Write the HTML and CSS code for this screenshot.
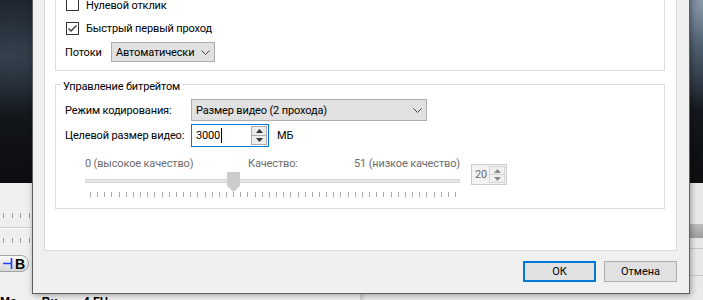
FILE: index.html
```html
<!DOCTYPE html>
<html lang="ru">
<head>
    <meta charset="utf-8">
    <title>Параметры кодирования</title>
    <link rel="stylesheet" href="styles.css">
</head>
<body>
    <div class="desk">
        <div class="video"></div>
        <div class="tools">
            <div class="tools-left">
                <div class="ticks"></div>
                <div class="rule"></div>
                <div class="ticks"></div>
                <div class="markb">
                    <svg width="10" height="13" viewBox="0 0 10 13"><path d="M0 6.5H8.5M8.5 1V12" stroke="#1f3cff" stroke-width="1.6" fill="none"/></svg>
                    <b>B</b>
                </div>
                <div class="status"><span>Ма</span><span>Ви</span><span>4 ГЦ</span></div>
            </div>
            <div class="tools-right">
                <div class="band"></div>
                <div class="hline first"></div>
                <div class="hline"></div>
            </div>
        </div>
    </div>

    <div class="dialog">
        <div class="page">
            <fieldset class="group g1">
                <div class="row check">
                    <span class="box"></span>
                    <span class="low">Нулевой отклик</span>
                </div>
                <div class="row check">
                    <span class="box"><svg width="11" height="11" viewBox="0 0 11 11"><path d="M1.5 5.5L4 8L9.5 2.5" stroke="#333" stroke-width="1.3" fill="none"/></svg></span>
                    <span>Быстрый первый проход</span>
                </div>
                <div class="row threads">
                    <span class="lbl-short">Потоки</span>
                    <div class="combo small">
                        <span>Автоматически</span>
                        <svg width="9" height="5" viewBox="0 0 9 5"><path d="M0.5 0.5L4.5 4.5L8.5 0.5" stroke="#444" fill="none"/></svg>
                    </div>
                </div>
            </fieldset>

            <fieldset class="group g2">
                <legend>Управление битрейтом</legend>
                <div class="row field">
                    <span class="lbl">Режим кодирования:</span>
                    <div class="combo wide">
                        <span>Размер видео (2 прохода)</span>
                        <svg width="9" height="5" viewBox="0 0 9 5"><path d="M0.5 0.5L4.5 4.5L8.5 0.5" stroke="#444" fill="none"/></svg>
                    </div>
                </div>
                <div class="row field size">
                    <span class="lbl">Целевой размер видео:</span>
                    <div class="spin focus">
                        <span class="val">3000<i class="caret"></i></span>
                        <div class="arrows">
                            <span><svg width="7" height="4" viewBox="0 0 7 4"><path d="M0 4L3.5 0L7 4Z" fill="#333"/></svg></span>
                            <span><svg width="7" height="4" viewBox="0 0 7 4"><path d="M0 0L3.5 4L7 0Z" fill="#333"/></svg></span>
                        </div>
                    </div>
                    <span class="unit">МБ</span>
                </div>
                <div class="quality">
                    <div class="slider">
                        <div class="scale">
                            <span class="lo">0 (высокое качество)</span>
                            <span>Качество:</span>
                            <span class="hi">51 (низкое качество)</span>
                        </div>
                        <div class="track-area">
                            <div class="track"></div>
                            <svg class="thumb" width="13" height="20" viewBox="0 0 13 20"><path d="M0 0H13V14L6.5 20L0 14Z" fill="#cccccc"/></svg>
                        </div>
                        <div class="marks"></div>
                    </div>
                    <div class="spin off">
                        <span class="val">20</span>
                        <div class="arrows">
                            <span><svg width="7" height="4" viewBox="0 0 7 4"><path d="M0 4L3.5 0L7 4Z" fill="#8a8a8a"/></svg></span>
                            <span><svg width="7" height="4" viewBox="0 0 7 4"><path d="M0 0L3.5 4L7 0Z" fill="#8a8a8a"/></svg></span>
                        </div>
                    </div>
                </div>
            </fieldset>
        </div>
        <div class="buttons">
            <button class="btn default">ОК</button>
            <button class="btn">Отмена</button>
        </div>
    </div>
</body>
</html>
```

FILE: styles.css
```css
body {
    margin: 0;
    width: 703px;
    height: 300px;
    overflow: hidden;
    position: relative;
    background: #f0f0f0;
    font: 11px Roboto, "Liberation Sans", sans-serif;
    letter-spacing: -0.15px;
    color: #000;
}

/* background application */
.desk {
    height: 300px;
    display: flex;
    flex-direction: column;
}

.video {
    flex: none;
    height: 183px;
    background:
        radial-gradient(ellipse 90px 110px at 100% 0%, #8c9cad 0%, #4c5b6a 45%, rgba(30, 36, 44, 0) 100%),
        radial-gradient(ellipse 120px 60px at 10px 55px, #34414e 0%, rgba(30, 38, 46, 0) 100%),
        linear-gradient(#1c232b, #1a2027 40%, #101317 75%, #0c0e10);
}

.tools {
    flex: 1;
    min-height: 0;
    overflow: hidden;
    display: flex;
    background: #efefef;
}

.tools-left {
    width: 360px;
    padding-top: 30px;
}

.ticks {
    height: 5px;
    background: repeating-linear-gradient(to right, transparent 0 3px, #9a9a9a 3px 4px, transparent 4px 8.6px);
}

.rule {
    height: 1px;
    margin-top: 9px;
    background: #cdcdcd;
    border-bottom: 1px solid #fafafa;
}

.rule + .ticks {
    margin-top: 9px;
}

.markb {
    margin: 12px 0 0 -12px;
    width: 36px;
    height: 15px;
    border: 1px solid #a2a2a2;
    border-radius: 8px;
    background: linear-gradient(#fafafa, #d6d6d6);
    display: flex;
    align-items: center;
    justify-content: flex-end;
    gap: 2px;
    padding-right: 3px;
}

.markb b {
    font: bold 14px "Liberation Sans", sans-serif;
}

.status {
    margin-top: 23px;
    font: bold 12px/15px "Liberation Sans", sans-serif;
    letter-spacing: 0;
    display: flex;
    gap: 25px;
}

.tools-right {
    flex: 1;
    padding-top: 41px;
    background: linear-gradient(to right, #c9c9c9, #e9e9e9 6px);
}

.band {
    height: 14px;
    background: linear-gradient(#bdbdbd, #9d9d9d);
}

.hline {
    height: 1px;
    background: #c6c6c6;
    margin-top: 10px;
}

.hline + .hline {
    margin-top: 26px;
}

/* dialog window */
.dialog {
    position: absolute;
    left: 32px;
    top: -40px;
    width: 658px;
    height: 334px;
    box-sizing: border-box;
    border: 1px solid #5e5e5e;
    background: #f0f0f0;
    box-shadow: 1px 1px 6px rgba(0, 0, 0, 0.35);
    padding: 9px 0 11px 11px;
    display: flex;
    flex-direction: column;
}

.page {
    flex: 1;
    margin-right: 12px;
    background: #fff;
    border: 1px solid #d9d9d9;
    padding: 9px 11px 0 10px;
}

.group {
    margin: 0;
    min-inline-size: 0;
    border: 1px solid #dcdcdc;
}

.g1 {
    padding: 11px 9px 8px 9px;
}

.g2 {
    margin-top: 6px;
    padding: 7px 9px 11px 9px;
}

.g2 legend {
    padding: 0 2px;
    margin-left: -4px;
    line-height: 15px;
    position: relative;
    top: 2px;
}

.row {
    display: flex;
    align-items: center;
}

.check {
    height: 24px;
    padding-left: 1px;
    gap: 7px;
}

.low {
    margin-top: 3px;
}

.box {
    width: 11px;
    height: 11px;
    border: 1px solid #333;
    background: #fff;
    display: flex;
}

.threads {
    margin-top: 2px;
}

.lbl-short {
    width: 46px;
}

.combo {
    box-sizing: border-box;
    height: 20px;
    border: 1px solid #adadad;
    background: #e1e1e1;
    display: flex;
    align-items: center;
    justify-content: space-between;
    padding: 0 4px 0 4px;
}

.combo.small {
    width: 104px;
}

.combo.wide {
    width: 236px;
    height: 22px;
}

.lbl {
    width: 126px;
    white-space: nowrap;
}

.size {
    margin-top: 3px;
}

.spin {
    box-sizing: border-box;
    display: flex;
    align-items: center;
    justify-content: space-between;
    background: #fff;
}

.spin.focus {
    width: 78px;
    height: 23px;
    border: 1px solid #0078d7;
    padding: 0 1px 0 4px;
}

.val {
    display: flex;
    align-items: center;
}

.caret {
    width: 1px;
    height: 15px;
    background: #000;
    margin-left: 1px;
}

.arrows {
    width: 14px;
    height: 17px;
    border: 1px solid #adadad;
    background: #ececec;
    display: flex;
    flex-direction: column;
}

.arrows span {
    flex: 1;
    display: flex;
    align-items: center;
    justify-content: center;
}

.arrows span + span {
    border-top: 1px solid #adadad;
}

.unit {
    margin-left: 8px;
}

.quality {
    display: flex;
    margin-top: 9px;
    padding-left: 20px;
}

.slider {
    width: 375px;
    flex: none;
}

.scale {
    display: flex;
    line-height: 15px;
    color: #6d6d6d;
}

.scale .lo {
    width: 163px;
}

.scale .hi {
    margin-left: auto;
}

.track-area {
    position: relative;
    height: 21px;
}

.track {
    position: relative;
    top: 8px;
    height: 2px;
    border: 1px solid #d6d6d6;
    background: #e7e7e7;
}

.thumb {
    position: absolute;
    left: 142px;
    top: 1px;
}

.marks {
    height: 5px;
    margin: 0 4px 0 5px;
    background: repeating-linear-gradient(to right, #a9a9a9 0 1px, transparent 1px 7.157px);
}

.spin.off {
    flex: none;
    width: 36px;
    height: 21px;
    margin: 8px 0 0 11px;
    border: 1px solid #cccccc;
    background: #f3f3f3;
    color: #6d6d6d;
    padding: 0 1px 0 3px;
}

.spin.off .arrows {
    height: 15px;
    border-color: #d4d4d4;
    background: #f0f0f0;
}

.spin.off .arrows span + span {
    border-top-color: #d4d4d4;
}

.buttons {
    margin-top: 10px;
    padding-right: 12px;
    display: flex;
    justify-content: flex-end;
    gap: 8px;
}

.btn {
    box-sizing: border-box;
    width: 73px;
    height: 21px;
    border: 1px solid #adadad;
    background: #e1e1e1;
    font: 11px Roboto, "Liberation Sans", sans-serif;
    color: #000;
    padding: 0;
}

.btn.default {
    border: 2px solid #0078d7;
}
```
